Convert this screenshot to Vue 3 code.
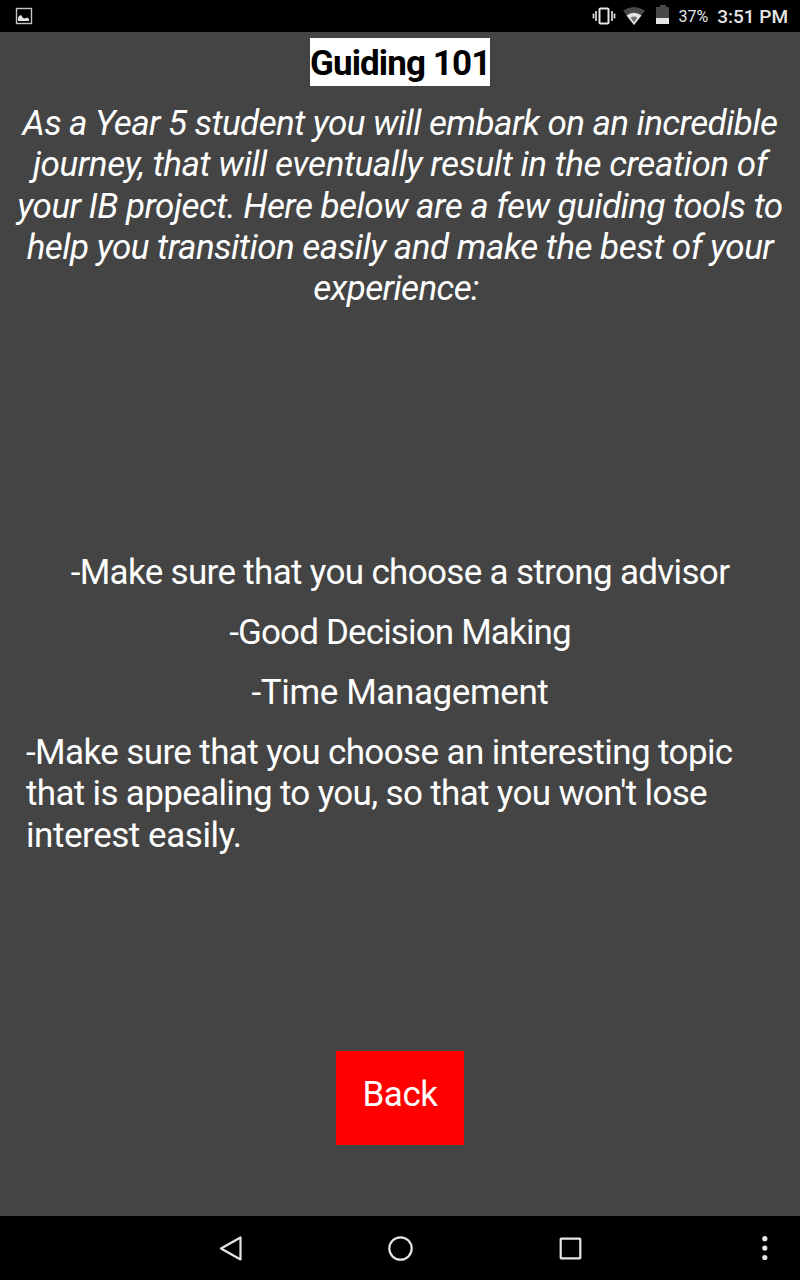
<template>
  <div class="screen">
    <header class="status-bar">
      <svg class="icon-image" width="18" height="18" viewBox="0 0 18 18">
        <rect x="1.5" y="1.5" width="15" height="15" fill="none" stroke="#c4c4c4" stroke-width="1.4" />
        <path d="M3 14v-3l1-2 2-1 2 3 2 .5 2-1 2 1.5v2z" fill="#e6e6e6" />
      </svg>
      <div class="status-right">
        <svg class="icon-vibrate" width="24" height="20" viewBox="0 0 24 20">
          <rect x="7.5" y="2.5" width="9" height="15" rx="1" fill="none" stroke="#e6e6e6" stroke-width="2" />
          <path d="M4 5v10M1.5 7.5v5M20 5v10M22.5 7.5v5" stroke="#e6e6e6" stroke-width="1.6" />
        </svg>
        <svg class="icon-wifi" width="22" height="18" viewBox="0 0 22 18">
          <path d="M0 3.5Q11-3.5 22 3.5L11 18z" fill="#484848" />
          <path d="M3.5 8.5Q11 3 18.5 8.5L11 18z" fill="#e6e6e6" />
          <path d="M7.5 10.5Q11 8.5 14.5 10.5L11 15.5z" fill="#777" />
        </svg>
        <svg class="icon-battery" width="14" height="20" viewBox="0 0 14 20">
          <path d="M4 0h6v2h3v11H0V2h4z" fill="#484848" />
          <path d="M0 13h13v6H0z" fill="#e6e6e6" />
        </svg>
        <span class="percent">37%</span>
        <span class="clock">3:51 PM</span>
      </div>
    </header>

    <main class="content">
      <h1 class="title">Guiding 101</h1>
      <p class="intro">
        <span v-for="line in intro" :key="line.text" class="line" :style="{ letterSpacing: line.spacing + 'px' }">{{ line.text }}</span>
      </p>
      <div class="tips">
        <p v-for="tip in tips" :key="tip.text" :style="{ letterSpacing: tip.spacing + 'px' }">{{ tip.text }}</p>
        <p class="long">
          <span v-for="line in longTip" :key="line.text" class="line" :style="{ letterSpacing: line.spacing + 'px' }">{{ line.text }}</span>
        </p>
      </div>
      <button class="back" type="button">Back</button>
    </main>

    <nav class="nav-bar">
      <svg width="800" height="64" viewBox="0 0 800 64" fill="none" stroke="#e6e6e6" stroke-width="2.2">
        <path d="M240.5 21.5v22L221 32.5z" stroke-linejoin="round" />
        <circle cx="400.5" cy="32.5" r="11.2" />
        <rect x="560.7" y="22.7" width="19.6" height="19.6" rx="0.5" />
        <g fill="#e6e6e6" stroke="none">
          <circle cx="764.8" cy="22.7" r="2.6" />
          <circle cx="764.8" cy="32.1" r="2.6" />
          <circle cx="764.8" cy="41.5" r="2.6" />
        </g>
      </svg>
    </nav>
  </div>
</template>

<script setup>
// Tracking is tuned line by line
const intro = [
  { text: 'As a Year 5 student you will embark on an incredible', spacing: -0.58 },
  { text: 'journey, that will eventually result in the creation of', spacing: -0.45 },
  { text: 'your IB project. Here below are a few guiding tools to', spacing: -0.54 },
  { text: 'help you transition easily and make the best of your', spacing: -0.52 },
  { text: 'experience:\u00a0', spacing: -0.64 },
];

const tips = [
  { text: '-Make sure that you choose a strong advisor', spacing: -0.67 },
  { text: '-Good Decision Making', spacing: -0.85 },
  { text: '-Time Management', spacing: -0.4 },
];

const longTip = [
  { text: '-Make sure that you choose an interesting topic', spacing: -0.61 },
  { text: "that is appealing to you, so that you won't lose", spacing: -0.66 },
  { text: 'interest easily.', spacing: -0.45 },
];
</script>

<style>
body {
  margin: 0;
  background: #000;
}
</style>

<style scoped>
.screen {
  display: flex;
  flex-direction: column;
  width: 800px;
  height: 1280px;
  overflow: hidden;
  background: #444;
  color: #fff;
  font-family: Roboto, sans-serif;
}
.status-bar {
  display: flex;
  justify-content: space-between;
  align-items: center;
  box-sizing: border-box;
  height: 32px;
  padding: 0 12px 0 15px;
  background: #000;
  color: #e6e6e6;
}
.status-right {
  display: flex;
  align-items: center;
}
.icon-wifi {
  margin-left: 7px;
}
.icon-battery {
  margin: -2px 0 0 11px;
}
.percent {
  margin-left: 8px;
  font-size: 16px;
}
.clock {
  margin-left: 9px;
  font-size: 19px;
  font-weight: 500;
}
.content {
  flex: 1;
  display: flex;
  flex-direction: column;
  align-items: center;
  font-size: 35px;
  line-height: 41.3px;
}
.line {
  display: block;
}
.title {
  width: 180px;
  height: 48px;
  margin: 6px 0 0;
  background: #fff;
  color: #000;
  font-size: 35px;
  line-height: 52px;
  letter-spacing: -0.9px;
  text-align: center;
  white-space: nowrap;
}
.intro {
  height: 207px;
  margin: 17px 0 0;
  font-style: italic;
  text-align: center;
  white-space: nowrap;
}
.tips {
  width: 748px;
  height: 304px;
  margin-top: 242px;
  text-align: center;
}
.tips p {
  margin: 0 0 18.7px;
  white-space: nowrap;
}
.tips .long {
  text-align: left;
}
.back {
  width: 128px;
  height: 94px;
  margin-top: 195px;
  padding: 0 0 8px;
  border: 0;
  background: #f00;
  color: #fff;
  font: 35px Roboto, sans-serif;
  letter-spacing: -0.5px;
}
.nav-bar {
  height: 64px;
  background: #000;
}
.nav-bar svg {
  display: block;
}
</style>
